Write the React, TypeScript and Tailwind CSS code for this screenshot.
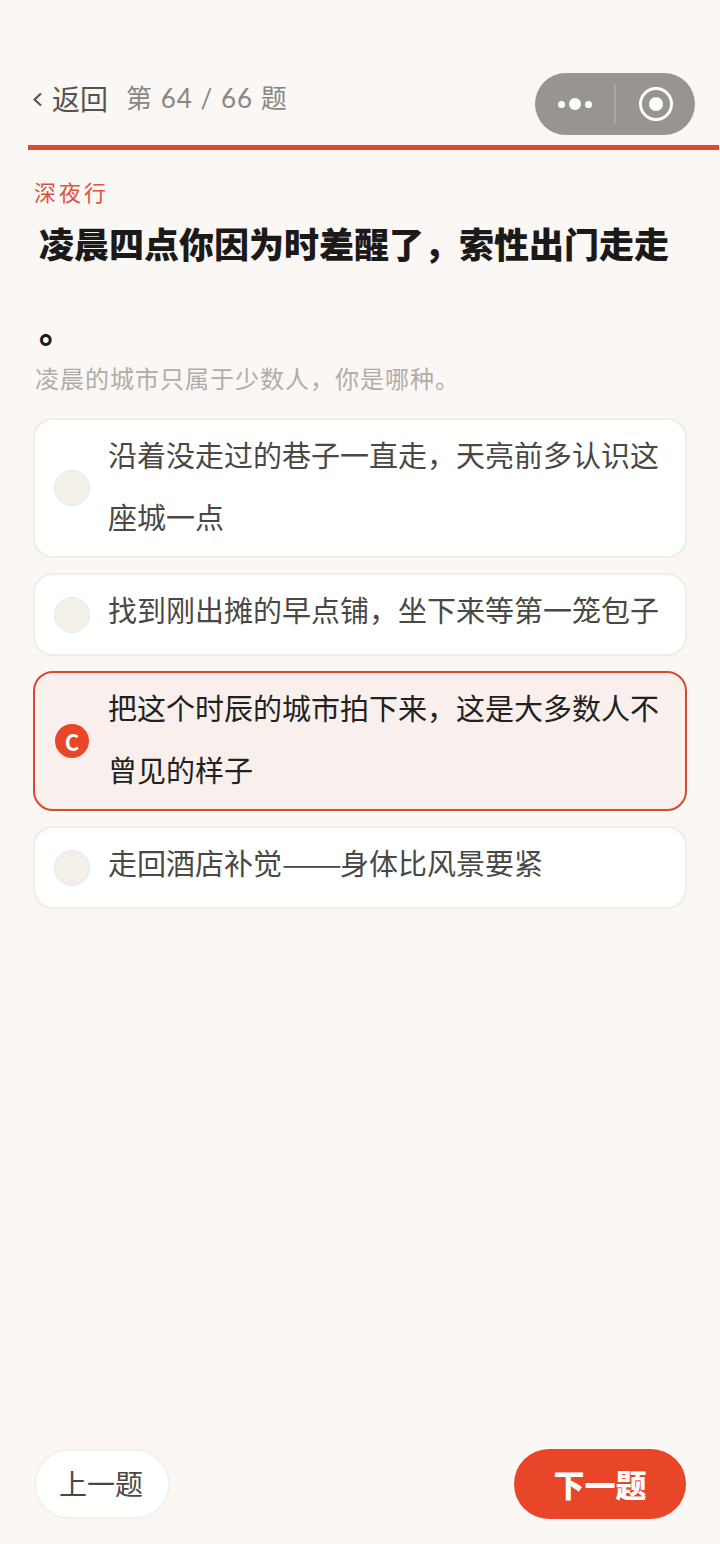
import type { ReactNode } from 'react';

const cjk = { fontFamily: '"Noto Sans CJK SC", "Noto Sans", sans-serif' };

const options: { text: ReactNode; letter?: string }[] = [
  { text: '沿着没走过的巷子一直走，天亮前多认识这座城一点' },
  { text: '找到刚出摊的早点铺，坐下来等第一笼包子' },
  { text: '把这个时辰的城市拍下来，这是大多数人不曾见的样子', letter: 'C' },
  {
    text: (
      <>
        走回酒店补觉<span className="inline-block w-[58px] origin-left scale-x-[1.235]">——</span>身体比风景要紧
      </>
    ),
  },
];

function Capsule() {
  return (
    <div className="flex h-[62px] w-[160px] items-center rounded-full bg-[#989591]">
      <div className="flex w-[79px] items-center justify-center gap-[4px]">
        <span className="h-[7px] w-[7px] rounded-full bg-white" />
        <span className="h-[12px] w-[12px] rounded-full bg-white" />
        <span className="h-[7px] w-[7px] rounded-full bg-white" />
      </div>
      <div className="h-[40px] w-[2px] bg-[#aaa7a3]" />
      <div className="flex flex-1 items-center justify-center">
        <div className="flex h-[34px] w-[34px] items-center justify-center rounded-full border-[3px] border-white">
          <span className="h-[14px] w-[14px] rounded-full bg-white" />
        </div>
      </div>
    </div>
  );
}

function Option({ text, letter }: { text: ReactNode; letter?: string }) {
  const on = !!letter;
  return (
    <div
      className={
        on
          ? 'flex min-h-[83px] items-center rounded-[20px] border-2 border-[#d9492e] bg-[#f9f0ed] pb-[9px] pl-[20px] pr-[20px] pt-[3px]'
          : 'flex min-h-[83px] items-center rounded-[20px] border-2 border-[#f1ece4] bg-white pb-[9px] pl-[19px] pr-[20px] pt-[3px]'
      }
    >
      {on ? (
        <div
          className="flex h-[34px] w-[34px] shrink-0 translate-y-[3px] items-center justify-center rounded-full bg-[#e94528] text-[22px] font-bold leading-none text-white"
          style={cjk}
        >
          {letter}
        </div>
      ) : (
        <div className="h-[36px] w-[36px] shrink-0 translate-y-[3px] rounded-full border border-[#ece8df] bg-[#f4f1ea]" />
      )}
      <div className={on ? 'ml-[19px] self-start text-[29px] leading-[62px] text-[#222120]' : 'ml-[18px] self-start text-[29px] leading-[62px] text-[#4a4845]'}>
        {text}
      </div>
    </div>
  );
}

export default function App() {
  return (
    <div className="flex h-[1544px] w-[720px] flex-col overflow-hidden bg-[#fbf7f4]" style={cjk}>
      <header className="flex items-center justify-between pl-[33px] pr-[25px] pt-[73px]">
        <div className="mb-[12px] flex items-center">
          <svg width="9" height="15" viewBox="0 0 9 15" className="mr-[10px] mt-[2px]" fill="none" stroke="#55524f" strokeWidth="2.2">
            <path d="M8 1.5 L1.5 7.5 L8 13.5" />
          </svg>
          <span className="text-[28px] leading-none text-[#55524f]">返回</span>
          <span className="ml-[18px] text-[26px] leading-none tracking-[1px] text-[#8a8783]" style={{ fontFamily: 'Lato, "Noto Sans CJK SC", sans-serif' }}>
            第 64 / 66 题
          </span>
        </div>
        <Capsule />
      </header>

      <div className="ml-[28px] mr-[1px] mt-[10px] h-[5px] bg-[#dc4a2d]" />

      <main className="px-[33px]">
        <div className="mt-[28px] pl-[1px] text-[22px] leading-[26px] tracking-[3px] text-[#d9543a]">深夜行</div>
        <h1 className="-mt-[4px] pl-[6px] text-[35px] font-black leading-[85px] text-[#1b1a19] [line-break:anywhere]">
          凌晨四点你因为时差醒了，索性出门走走。
        </h1>
        <p className="-mt-[5px] pl-[2px] text-[24px] leading-[26px] tracking-[1px] text-[#b0ada8]">凌晨的城市只属于少数人，你是哪种。</p>

        <div className="mt-[27px] flex flex-col gap-[15px]">
          {options.map((o, i) => (
            <Option key={i} text={o.text} letter={o.letter} />
          ))}
        </div>
      </main>

      <footer className="mt-auto flex items-center justify-between px-[34px] pb-[25px]">
        <button className="h-[70px] w-[136px] rounded-full border-2 border-[#f4f0ea] bg-white pb-[2px] pr-[2px] text-[28px] text-[#4a4845]">上一题</button>
        <button className="h-[70px] w-[172px] rounded-full bg-[#e94528] text-[31px] font-black text-white">下一题</button>
      </footer>
    </div>
  );
}
